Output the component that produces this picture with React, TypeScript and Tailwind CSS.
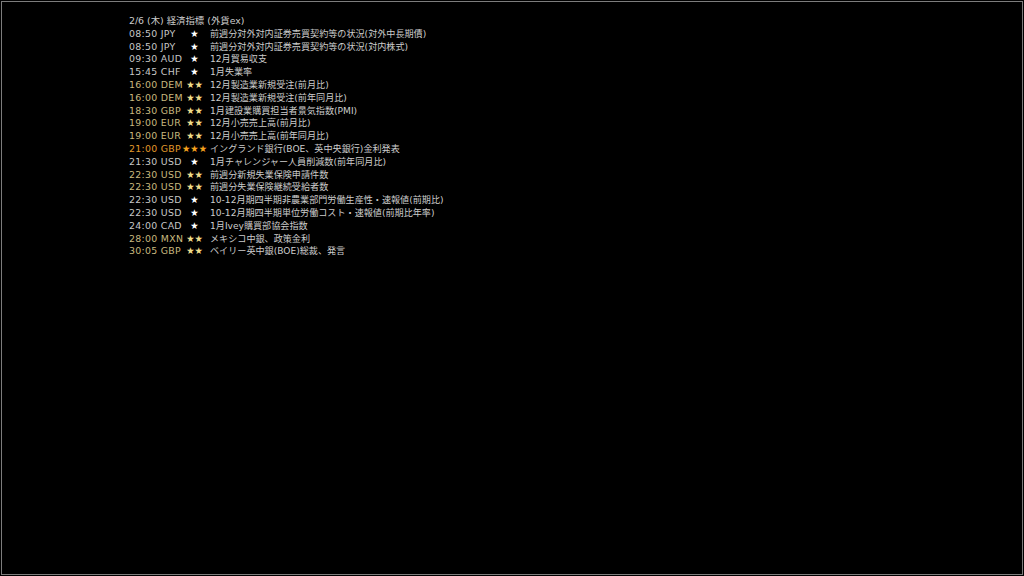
import React from "react";

type Row = { t: string; s: number; e: string };

const rows: Row[] = [
  { t: "08:50 JPY", s: 1, e: "前週分対外対内証券売買契約等の状況(対外中長期債)" },
  { t: "08:50 JPY", s: 1, e: "前週分対外対内証券売買契約等の状況(対内株式)" },
  { t: "09:30 AUD", s: 1, e: "12月貿易収支" },
  { t: "15:45 CHF", s: 1, e: "1月失業率" },
  { t: "16:00 DEM", s: 2, e: "12月製造業新規受注(前月比)" },
  { t: "16:00 DEM", s: 2, e: "12月製造業新規受注(前年同月比)" },
  { t: "18:30 GBP", s: 2, e: "1月建設業購買担当者景気指数(PMI)" },
  { t: "19:00 EUR", s: 2, e: "12月小売売上高(前月比)" },
  { t: "19:00 EUR", s: 2, e: "12月小売売上高(前年同月比)" },
  { t: "21:00 GBP", s: 3, e: "イングランド銀行(BOE、英中央銀行)金利発表" },
  { t: "21:30 USD", s: 1, e: "1月チャレンジャー人員削減数(前年同月比)" },
  { t: "22:30 USD", s: 2, e: "前週分新規失業保険申請件数" },
  { t: "22:30 USD", s: 2, e: "前週分失業保険継続受給者数" },
  { t: "22:30 USD", s: 1, e: "10-12月期四半期非農業部門労働生産性・速報値(前期比)" },
  { t: "22:30 USD", s: 1, e: "10-12月期四半期単位労働コスト・速報値(前期比年率)" },
  { t: "24:00 CAD", s: 1, e: "1月Ivey購買部協会指数" },
  { t: "28:00 MXN", s: 2, e: "メキシコ中銀、政策金利" },
  { t: "30:05 GBP", s: 2, e: "ベイリー英中銀(BOE)総裁、発言" },
];

function timeColor(s: number) {
  if (s === 3) return "text-[#e39a2a]";
  if (s === 2) return "text-[#c9b97f]";
  return "text-[#c8c8c8]";
}
function starColor(s: number) {
  if (s === 3) return "text-[#f5a21e]";
  if (s === 2) return "text-[#efdc8a]";
  return "text-[#ffffff]";
}

export default function App() {
  return (
    <div className="w-[1024px] h-[576px] bg-black p-px">
      <div
        className="h-full w-full border border-[#7c7c7c] bg-black pt-[13px] pl-[127px] text-[9.4px] leading-[12.8px] whitespace-nowrap"
        style={{ fontFamily: '"DejaVu Sans", "Noto Sans CJK JP", sans-serif' }}
      >
        <div className="text-[#cccccc]">2/6 (木) 経済指標 (外貨ex)</div>
        <div className="grid grid-cols-[51px_29px_auto] w-max">
          {rows.map((r, i) => (
            <React.Fragment key={i}>
              <div className={`tracking-[0.3px] ${timeColor(r.s)}`}>{r.t}</div>
              <div className={`text-center text-[9.3px] ${starColor(r.s)}`}>
                {"★".repeat(r.s)}
              </div>
              <div className="text-[9.1px] text-[#cccccc] pl-px">{r.e}</div>
            </React.Fragment>
          ))}
        </div>
      </div>
    </div>
  );
}
